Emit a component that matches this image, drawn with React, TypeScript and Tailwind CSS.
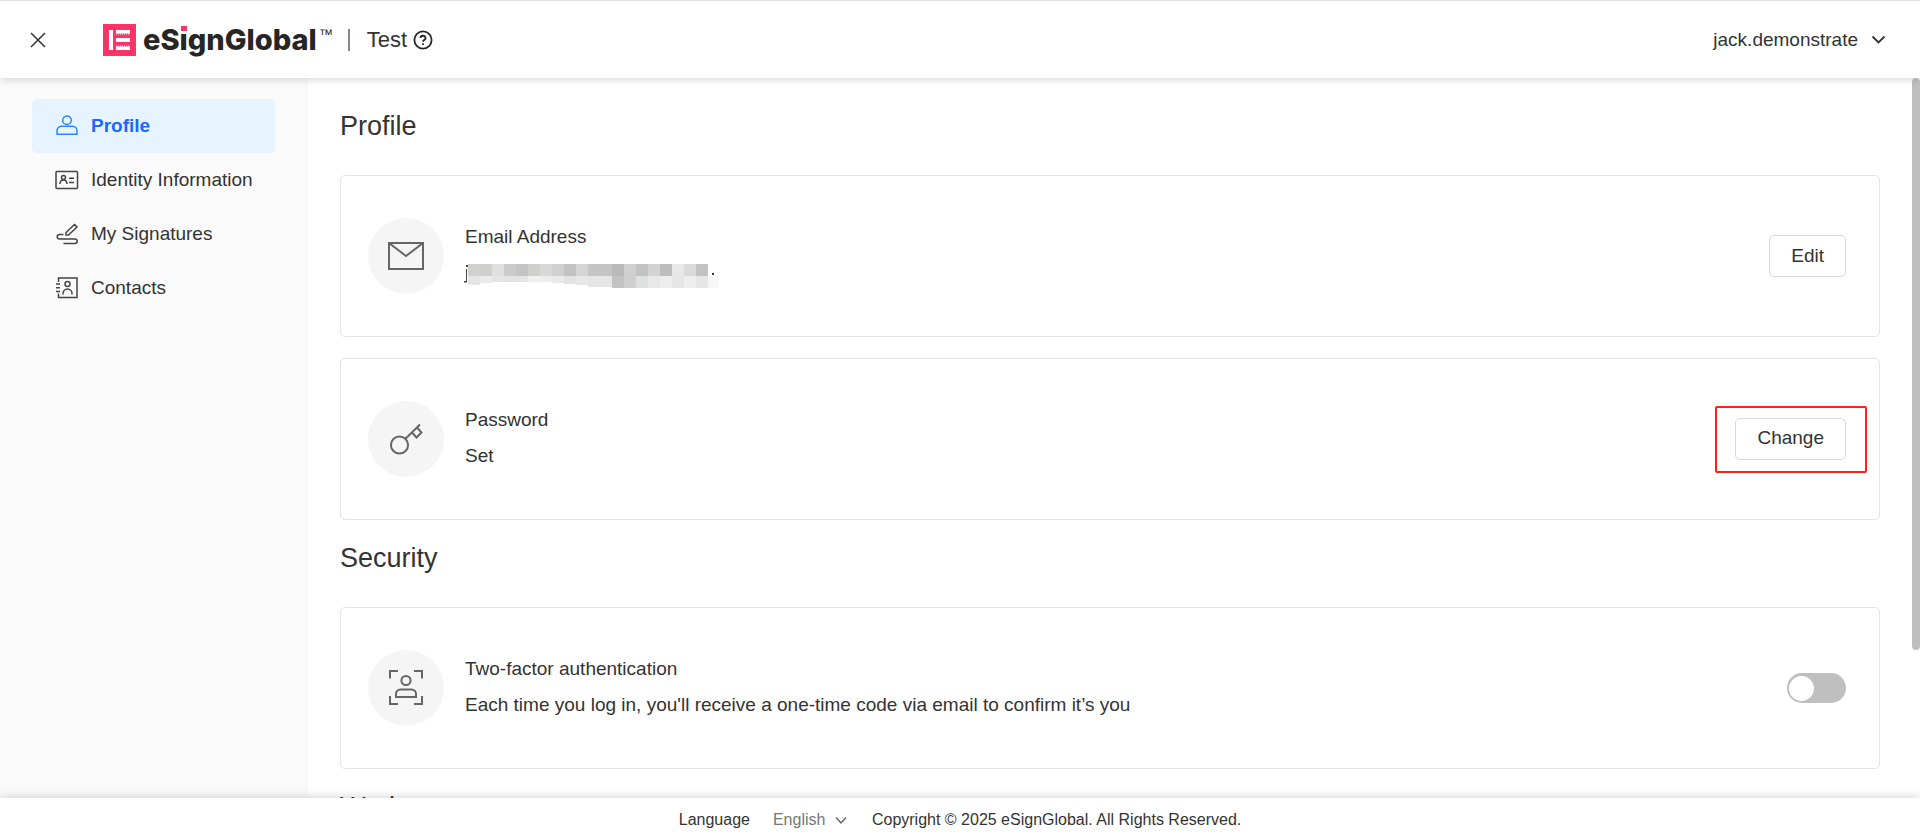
import React from "react";

const SHADES = [
  ["#d0d0ce", "#cfcfce", "#dfe1e0", "#cbcbcb", "#c4c4c4", "#cfcfcc", "#d8d8d8", "#d0d0ce", "#c2c2c2", "#d5d5d5", "#c5c5c5", "#c5c5c5", "#b9b9b9", "#d0d0d0", "#c2c2c2", "#d3d3d3", "#bdbdbd", "#e8e8e8", "#dadada", "#c2c2c2"],
  ["#e5e5e5", "#ebebeb", "#e4e5e5", "#e2e2e2", "#e4e4e4", "#f0f0f0", "#ededed", "#e9e9e9", "#e3e3e3", "#e8e8e8", "#e6e6e6", "#e6e6e6", "#c3c3c3", "#cfcfcf", "#dfe1e1", "#e8e8e8", "#eeeeee", "#e6e6e6", "#eeeeee", "#e6e6e6", "#f7f7f7"],
];
const LOWER_HEIGHTS = [9, 7, 6, 6, 6, 6, 6, 7, 8, 9, 11, 11, 12, 12, 12, 12, 12, 12, 12, 12, 12];

function MaskedEmail() {
  return (
    <svg className="block overflow-visible" width="256" height="36" role="img" aria-label="Email address hidden">
      <path d="M1 10h2v2H1zM1 14h1v13H1zM-1 26h3v1.500h-3z" fill="#444" />
      {SHADES.map((row, r) =>
        row.map((c, i) => (
          <rect key={`${r}-${i}`} x={3 + i * 12} y={r === 0 ? 9 : 21} width={i === 20 ? 11 : 12} height={r === 0 ? 12 : LOWER_HEIGHTS[i]} fill={c} />
        )),
      )}
      <rect x="247" y="18" width="2" height="2" fill="#333" />
    </svg>
  );
}

const nav = [
  {
    label: "Profile",
    icon: (
      <>
        <circle cx="12" cy="6.200" r="4.300" />
        <path d="M2 20.300v-3.500a4.600 4.600 0 0 1 4.600-4.600h10.800a4.600 4.600 0 0 1 4.600 4.600v3.500z" />
      </>
    ),
  },
  {
    label: "Identity Information",
    icon: (
      <>
        <rect x="1" y="3.500" width="21.500" height="17" rx="1" />
        <circle cx="8.500" cy="9.500" r="2" />
        <path d="M5 16v-.5a3.500 3.500 0 0 1 7 0v.5M14 10.200h5M14 14.500h5" />
      </>
    ),
  },
  {
    label: "My Signatures",
    icon: (
      <path d="M19.500 2.500l2.500 2.500-8.500 8h-2.500v-2.500zM8.500 12.500H4.500a2.300 2.300 0 0 0 0 4.600H20a2.100 2.100 0 0 1 0 4.300H8.500" />
    ),
  },
  {
    label: "Contacts",
    icon: (
      <>
        <path d="M3.500 6V2h18.500v19.500H3.500v-4M1 8h4M1 11.700h4M1 15.500h4" />
        <circle cx="12.500" cy="8" r="2.500" />
        <path d="M8 18.500v-1a4.500 4.500 0 0 1 9 0v1" />
      </>
    ),
  },
];

const envelope = (
  <>
    <rect x="3" y="7" width="34" height="26" />
    <path d="M3 7l17 13L37 7" />
  </>
);
const key = (
  <>
    <circle cx="13.500" cy="26" r="8.600" />
    <path d="M19.500 19.700L34 5.500M26 13.500l4.500 5 5-5-4.500-5" />
  </>
);
const faceScan = (
  <>
    <path d="M4 10.500V3h8M28 3h8v7.500M36 28v8h-8M12 36H4v-8" />
    <circle cx="20" cy="12.500" r="4.600" />
    <path d="M10 29v-3a4.500 4.500 0 0 1 4.500-4.500h11a4.500 4.500 0 0 1 4.500 4.500v3z" />
  </>
);

function Card({ icon, title, detail, action }: { icon: React.ReactNode; title: string; detail: React.ReactNode; action: React.ReactNode }) {
  return (
    <section className="flex h-[162px] items-center rounded-[5px] border border-[#e5e5e5] pl-[27px] pr-[33px]">
      <div className="flex size-[76px] shrink-0 items-center justify-center rounded-full bg-[#f5f5f5]">
        <svg width="40" height="40" viewBox="0 0 40 40" fill="none" stroke="#666" strokeWidth="2" aria-hidden="true">
          {icon}
        </svg>
      </div>
      <div className="ml-[21px] flex-1 pb-[2px]">
        <h3 className="h-9 leading-9">{title}</h3>
        <div className="h-9 leading-9">{detail}</div>
      </div>
      {action}
    </section>
  );
}

const heading = "text-[27px] leading-9";
const button = "h-[42px] rounded-[5px] border border-[#d9d9d9] bg-white px-[21px] text-[19px]";

export default function App() {
  return (
    <div className="flex h-screen flex-col overflow-hidden bg-white font-['Liberation_Sans',Arial,sans-serif] text-[19px] text-[#333]">
      <header className="z-10 flex h-[78px] shrink-0 items-center border-t border-[#ddd] bg-white pl-[30px] pr-[34px] shadow-[0_0_10px_rgba(0,0,0,0.2)]">
        <button aria-label="Close" className="mr-[57px]">
          <svg width="16" height="16" viewBox="0 0 16 16" stroke="#333" strokeWidth="1.500" aria-hidden="true">
            <path d="M1 1l14 14M15 1L1 15" />
          </svg>
        </button>
        <a href="#" className="flex items-center" aria-label="eSignGlobal home">
          <svg width="33" height="32" viewBox="0 0 33 32" aria-hidden="true">
            <path fill="#ff3366" d="M0 0h33v32H0z" />
            <path fill="#fff" d="M6 6h4v20H6zM13 6h14v3.500H13zM13 14h14v4H13zM13 22.500h14V26H13z" />
            <path stroke="#fff" strokeDasharray="1 1" d="M13 10h14M13 22h14" />
          </svg>
          <span className="ml-[7px] font-[Inter,sans-serif] text-[29px] leading-8 font-extrabold text-[#262626]">
            eS
            <span className="relative">
              i
              <span className="absolute left-0 top-1 h-[7px] w-full bg-white px-px pb-[2px]">
                <span className="block size-full bg-[#ff3366]" />
              </span>
            </span>
            gnGlobal
          </span>
          <span className="mb-3 ml-[2px] text-sm leading-4 text-[#262626]">™</span>
        </a>
        <span className="ml-[15px] h-[22px] w-[2px] bg-[#888]" />
        <span className="ml-[17px] text-[22px]">Test</span>
        <button aria-label="Help" className="ml-[6px]">
          <svg width="20" height="20" viewBox="0 0 20 20" fill="none" stroke="#262626" strokeWidth="1.800" aria-hidden="true">
            <circle cx="10" cy="10" r="8.600" />
            <path d="M7.500 8a2.500 2.300 0 1 1 3.600 2.100c-.8.400-1.100.8-1.100 1.700M10 13.200v1.800" />
          </svg>
        </button>
        <button className="ml-auto flex items-center gap-[13px] pt-px">
          jack.demonstrate
          <svg width="15" height="10" viewBox="0 0 15 10" fill="none" stroke="#333" strokeWidth="1.800" aria-hidden="true">
            <path d="M1.500 1.500l6 6 6-6" />
          </svg>
        </button>
      </header>

      <div className="relative flex min-h-0 flex-1">
        <nav className="w-[308px] shrink-0 bg-[#fafafa] pl-8 pr-[33px] pt-[21px]">
          {nav.map((item, i) => (
            <a
              key={item.label}
              href="#"
              className={`flex h-[54px] items-center gap-3 rounded-[5px] pl-[23px] ${i === 0 ? "bg-[#e6f4ff] font-bold text-[#1769ff]" : ""}`}
            >
              <svg width="24" height="24" viewBox="0 0 24 24" fill="none" stroke={i === 0 ? "#2b85ff" : "#444"} strokeWidth="1.500" aria-hidden="true">
                {item.icon}
              </svg>
              {item.label}
            </a>
          ))}
        </nav>
        <main className="min-w-0 flex-1 overflow-hidden pl-8 pr-10 pt-[30px]">
          <h2 className={heading}>Profile</h2>
          <div className="mb-5 mt-[31px] flex flex-col gap-[21px]">
            <Card icon={envelope} title="Email Address" detail={<MaskedEmail />} action={<button className={button}>Edit</button>} />
            <Card
              icon={key}
              title="Password"
              detail="Set"
              action={
                <div className="-mr-[21px] rounded-[2px] border-2 border-[#fa2314] pb-[11px] pl-[18px] pr-[19px] pt-[10px]">
                  <button className={`block ${button}`}>Change</button>
                </div>
              }
            />
          </div>
          <h2 className={heading}>Security</h2>
          <div className="mb-5 mt-[31px]">
            <Card
              icon={faceScan}
              title="Two-factor authentication"
              detail="Each time you log in, you'll receive a one-time code via email to confirm it’s you"
              action={
                <button role="switch" aria-checked="false" aria-label="Two-factor authentication" className="h-[30px] w-[59px] rounded-full bg-[#bfbfbf] p-[2px]">
                  <span className="block size-[25px] rounded-full bg-white" />
                </button>
              }
            />
          </div>
          <h2 className={heading}>Workspace</h2>
        </main>
        <div className="absolute right-0 top-0 h-[572px] w-2 rounded-full bg-[#bfbfbf]" />
      </div>

      <footer className="z-10 flex h-[42px] shrink-0 items-center justify-center bg-white pt-[2px] text-base shadow-[0_0_10px_rgba(0,0,0,0.2)]">
        <label htmlFor="language">Language</label>
        <span className="ml-[23px] mr-[25px] flex items-center text-[#777]">
          <select id="language" className="w-[62px] appearance-none bg-transparent">
            <option>English</option>
          </select>
          <svg width="12" height="9" viewBox="0 0 12 9" fill="none" stroke="#666" strokeWidth="1.500" aria-hidden="true">
            <path d="M1 1.500l5 5.500 5-5.500" />
          </svg>
        </span>
        <span>Copyright © 2025 eSignGlobal. All Rights Reserved.</span>
      </footer>
    </div>
  );
}
